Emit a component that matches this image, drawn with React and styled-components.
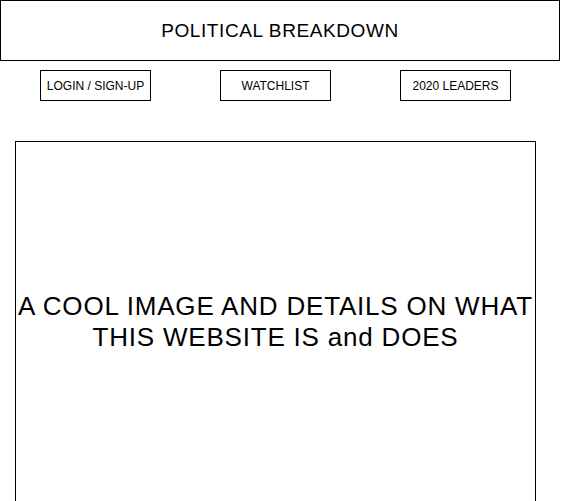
import styled, { createGlobalStyle } from "styled-components";

const Global = createGlobalStyle`
  * { box-sizing: border-box; }
  body {
    margin: 0;
    background: #fff;
    font-family: "Liberation Sans", Arial, Helvetica, sans-serif;
    color: #000;
  }
`;

const Page = styled.div`
  width: 561px;
  display: flex;
  flex-direction: column;
`;

const Header = styled.div`
  width: 560px;
  height: 61px;
  border: 1px solid #000;
  display: flex;
  align-items: center;
  justify-content: center;
  font-size: 19px;
  letter-spacing: 0.6px;
`;

const Nav = styled.div`
  display: flex;
  gap: 69px;
  padding-left: 40px;
  margin-top: 9px;
`;

const NavButton = styled.div`
  width: 111px;
  height: 31px;
  border: 1px solid #000;
  display: flex;
  align-items: center;
  justify-content: center;
  font-size: 12px;
`;

const Hero = styled.div`
  margin: 40px 0 0 15px;
  width: 521px;
  height: 361px;
  border: 1px solid #000;
  display: flex;
  align-items: center;
  justify-content: center;
  text-align: center;
  font-size: 26px;
  letter-spacing: 0.8px;
  line-height: 31px;
`;

export default function App() {
  return (
    <Page>
      <Global />
      <Header>POLITICAL BREAKDOWN</Header>
      <Nav>
        <NavButton>LOGIN / SIGN-UP</NavButton>
        <NavButton>WATCHLIST</NavButton>
        <NavButton>2020 LEADERS</NavButton>
      </Nav>
      <Hero>
        A COOL IMAGE AND DETAILS ON WHAT
        <br />
        THIS WEBSITE IS and DOES
      </Hero>
    </Page>
  );
}
